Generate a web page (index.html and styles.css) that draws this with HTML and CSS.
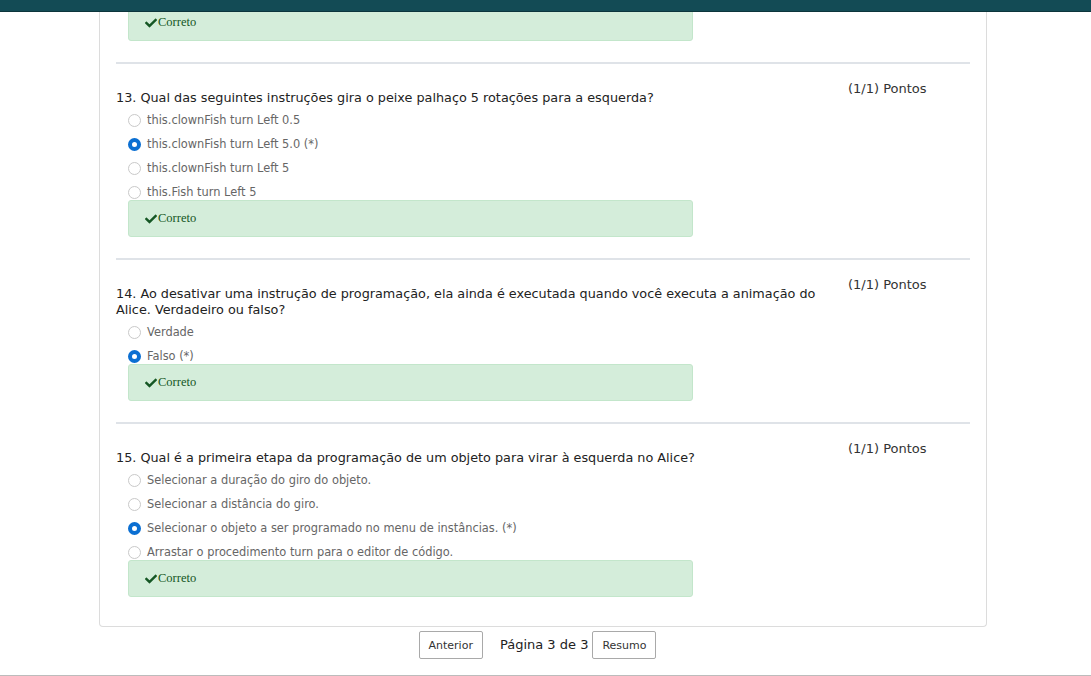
FILE: index.html
```html
<!DOCTYPE html>
<html lang="pt">
<head>
<meta charset="utf-8">
<title>Resultado</title>
<link rel="stylesheet" href="styles.css">
</head>
<body>
<header class="topbar"></header>

<main class="card">
  <section class="q q-partial">
    <div class="feedback"><svg class="check" viewBox="0 0 512 512"><path d="M173.9 439.4l-166.4-166.4c-10-10-10-26.2 0-36.2l36.2-36.2c10-10 26.2-10 36.2 0L192 312.7 432.1 72.6c10-10 26.2-10 36.2 0l36.2 36.2c10 10 10 26.2 0 36.2l-294.4 294.4c-10 10-26.2 10-36.2 0z"/></svg>Correto</div>
  </section>

  <section class="q">
    <div class="q-main">
      <p class="q-text">13. Qual das seguintes instruções gira o peixe palhaço 5 rotações para a esquerda?</p>
      <ul class="options">
        <li class="opt"><span class="radio"></span>this.clownFish turn Left 0.5</li>
        <li class="opt"><span class="radio radio-on"></span>this.clownFish turn Left 5.0 (*)</li>
        <li class="opt"><span class="radio"></span>this.clownFish turn Left 5</li>
        <li class="opt"><span class="radio"></span>this.Fish turn Left 5</li>
      </ul>
      <div class="feedback"><svg class="check" viewBox="0 0 512 512"><path d="M173.9 439.4l-166.4-166.4c-10-10-10-26.2 0-36.2l36.2-36.2c10-10 26.2-10 36.2 0L192 312.7 432.1 72.6c10-10 26.2-10 36.2 0l36.2 36.2c10 10 10 26.2 0 36.2l-294.4 294.4c-10 10-26.2 10-36.2 0z"/></svg>Correto</div>
    </div>
    <div class="q-points">(1/1) Pontos</div>
  </section>

  <section class="q">
    <div class="q-main">
      <p class="q-text">14. Ao desativar uma instrução de programação, ela ainda é executada quando você executa a animação do Alice. Verdadeiro ou falso?</p>
      <ul class="options">
        <li class="opt"><span class="radio"></span>Verdade</li>
        <li class="opt"><span class="radio radio-on"></span>Falso (*)</li>
      </ul>
      <div class="feedback"><svg class="check" viewBox="0 0 512 512"><path d="M173.9 439.4l-166.4-166.4c-10-10-10-26.2 0-36.2l36.2-36.2c10-10 26.2-10 36.2 0L192 312.7 432.1 72.6c10-10 26.2-10 36.2 0l36.2 36.2c10 10 10 26.2 0 36.2l-294.4 294.4c-10 10-26.2 10-36.2 0z"/></svg>Correto</div>
    </div>
    <div class="q-points">(1/1) Pontos</div>
  </section>

  <section class="q">
    <div class="q-main">
      <p class="q-text">15. Qual é a primeira etapa da programação de um objeto para virar à esquerda no Alice?</p>
      <ul class="options">
        <li class="opt"><span class="radio"></span>Selecionar a duração do giro do objeto.</li>
        <li class="opt"><span class="radio"></span>Selecionar a distância do giro.</li>
        <li class="opt"><span class="radio radio-on"></span>Selecionar o objeto a ser programado no menu de instâncias. (*)</li>
        <li class="opt"><span class="radio"></span>Arrastar o procedimento turn para o editor de código.</li>
      </ul>
      <div class="feedback"><svg class="check" viewBox="0 0 512 512"><path d="M173.9 439.4l-166.4-166.4c-10-10-10-26.2 0-36.2l36.2-36.2c10-10 26.2-10 36.2 0L192 312.7 432.1 72.6c10-10 26.2-10 36.2 0l36.2 36.2c10 10 10 26.2 0 36.2l-294.4 294.4c-10 10-26.2 10-36.2 0z"/></svg>Correto</div>
    </div>
    <div class="q-points">(1/1) Pontos</div>
  </section>
</main>

<nav class="pager">
  <button class="btn">Anterior</button>
  <span class="page-info">Página 3 de 3</span>
  <button class="btn">Resumo</button>
</nav>

<footer class="footer"></footer>
</body>
</html>
```

FILE: styles.css
```css
html, body {
  margin: 0;
  padding: 0;
  background: #ffffff;
}

body {
  font-family: "DejaVu Sans", Verdana, sans-serif;
  color: #222222;
}

.topbar {
  position: fixed;
  top: 0;
  left: 0;
  right: 0;
  height: 11px;
  background: #134b55;
  border-bottom: 1px solid #0c353c;
  z-index: 10;
}

.card {
  margin-left: 99px;
  width: 888px;
  box-sizing: border-box;
  border: 1px solid #dcdcdc;
  border-top: none;
  border-radius: 0 0 4px 4px;
  padding: 0 16px 29px;
  background: #ffffff;
}

.q-partial {
  padding-top: 4px;
  padding-bottom: 21px;
}

.q {
  display: grid;
  grid-template-columns: 1fr 122px;
  column-gap: 10px;
  align-items: start;
}

.q + .q {
  border-top: 2px solid #dfe3e8;
  padding-top: 17px;
  padding-bottom: 21px;
}

.q:last-child {
  padding-bottom: 0;
}

.q-partial .feedback {
  grid-column: 1;
}

.q-text {
  margin: 9px 0 0;
  font-size: 12.8px;
  line-height: 16px;
  color: #222222;
}

.q-points {
  font-size: 13px;
  line-height: 16px;
  color: #333333;
}

.options {
  list-style: none;
  margin: 4px 0 0;
  padding: 0 0 0 12px;
}

.opt {
  display: flex;
  align-items: center;
  box-sizing: border-box;
  height: 18px;
  padding-top: 2px;
  font-size: 11.4px;
  color: #666666;
}

.opt + .opt {
  margin-top: 6px;
}

.radio {
  width: 13px;
  height: 13px;
  box-sizing: border-box;
  border-radius: 50%;
  border: 1px solid #c9c9c9;
  background: #ffffff;
  margin-right: 6px;
  flex: none;
}

.radio-on {
  border: 4px solid #0b6fd2;
}

.feedback {
  margin-left: 12px;
  width: 565px;
  height: 37px;
  box-sizing: border-box;
  background: #d4edda;
  border: 1px solid #c3e6cb;
  border-radius: 3px;
  padding-left: 16px;
  display: flex;
  align-items: center;
  font-family: "Liberation Serif", "Times New Roman", serif;
  font-size: 12.5px;
  color: #155724;
}

.check {
  width: 12px;
  height: 12px;
  fill: #155724;
  margin-right: 1px;
}

.pager {
  width: 888px;
  margin-left: 99px;
  box-sizing: border-box;
  padding: 4px 11px 0 0;
  height: 48px;
  display: flex;
  justify-content: center;
  align-items: flex-start;
}

.btn {
  height: 28px;
  box-sizing: border-box;
  padding: 0 9px;
  background: #ffffff;
  border: 1px solid #a9a9a9;
  border-radius: 2px;
  font-family: "DejaVu Sans", Verdana, sans-serif;
  font-size: 11px;
  color: #333333;
}

.page-info {
  margin: 0 4px 0 17px;
  line-height: 28px;
  font-size: 13px;
  color: #222222;
}

.footer {
  border-top: 1px solid #bcbcbc;
  height: 20px;
}
```
